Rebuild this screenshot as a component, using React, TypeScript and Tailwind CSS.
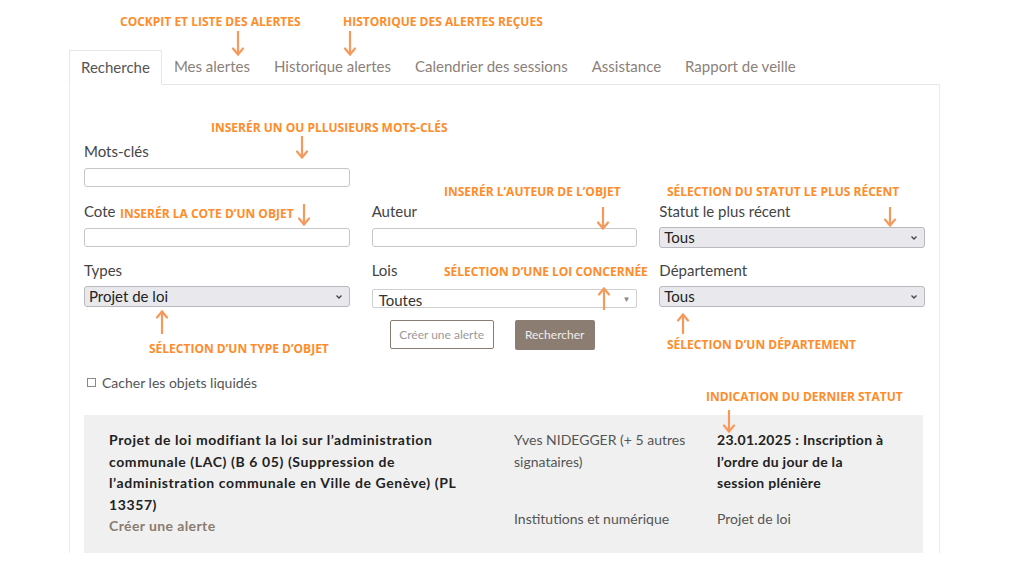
import React from "react";

const tabs = [
  "Recherche",
  "Mes alertes",
  "Historique alertes",
  "Calendrier des sessions",
  "Assistance",
  "Rapport de veille",
];

type Note = { text: string; x: number; y: number };
type Arrow = { x: number; top: number; bottom: number; up?: boolean };

const notes: Note[] = [
  { text: "COCKPIT ET LISTE DES ALERTES", x: 120, y: 22 },
  { text: "HISTORIQUE DES ALERTES REÇUES", x: 343, y: 22 },
  { text: "INSERÉR UN OU PLLUSIEURS MOTS-CLÉS", x: 211, y: 128 },
  { text: "INSERÉR LA COTE D’UN OBJET", x: 120, y: 214 },
  { text: "INSERÉR L’AUTEUR DE L’OBJET", x: 444, y: 192 },
  { text: "SÉLECTION DU STATUT LE PLUS RÉCENT", x: 667, y: 192 },
  { text: "SÉLECTION D’UNE LOI CONCERNÉE", x: 444, y: 272 },
  { text: "SÉLECTION D’UN TYPE D’OBJET", x: 149, y: 349 },
  { text: "SÉLECTION D’UN DÉPARTEMENT", x: 667, y: 345 },
  { text: "INDICATION DU DERNIER STATUT", x: 706, y: 397 },
];

const arrows: Arrow[] = [
  { x: 238, top: 31, bottom: 56 },
  { x: 350, top: 31, bottom: 56 },
  { x: 302, top: 136, bottom: 159 },
  { x: 304, top: 204, bottom: 226 },
  { x: 603, top: 207, bottom: 230 },
  { x: 890, top: 207, bottom: 227 },
  { x: 604, top: 287, bottom: 310, up: true },
  { x: 162, top: 310, bottom: 334, up: true },
  { x: 683, top: 313, bottom: 334, up: true },
  { x: 729, top: 410, bottom: 433 },
];

function ArrowMark({ a }: { a: Arrow }) {
  const h = a.bottom - a.top;
  return (
    <svg
      className="absolute"
      style={{ left: a.x - 7, top: a.top }}
      width={14}
      height={h}
      viewBox={`0 0 14 ${h}`}
      fill="none"
      stroke="#f6995c"
      strokeWidth={2.2}
      strokeLinecap="round"
      strokeLinejoin="round"
    >
      {a.up ? (
        <>
          <line x1={7} y1={1.5} x2={7} y2={h} />
          <polyline points={`2,7.5 7,1.5 12,7.5`} />
        </>
      ) : (
        <>
          <line x1={7} y1={0} x2={7} y2={h - 1.5} />
          <polyline points={`2,${h - 7.5} 7,${h - 1.5} 12,${h - 7.5}`} />
        </>
      )}
    </svg>
  );
}

function Chevron() {
  return (
    <svg width="8" height="6" viewBox="0 0 8 6" fill="none" stroke="#444" strokeWidth="1.3">
      <polyline points="1.5,1.5 4,4 6.5,1.5" />
    </svg>
  );
}

function Field({ label, children }: { label: string; children: React.ReactNode }) {
  return (
    <div className="flex flex-col">
      <div className="h-[22px] leading-[22px] text-[15px] text-[#444]">{label}</div>
      {children}
    </div>
  );
}

function TextBox() {
  return <div className="mt-[6px] h-[19px] rounded-[3px] border border-[#c6c6c6] bg-white" />;
}

function GraySelect({ value }: { value: string }) {
  return (
    <div className="mt-[5px] flex h-[21px] items-center justify-between rounded-[3px] border border-[#b9b9bd] bg-[#e9e9ed] pl-[4px] pr-[6px] text-[15px] text-[#222]">
      <span className="leading-none">{value}</span>
      <Chevron />
    </div>
  );
}

export default function App() {
  return (
    <div
      className="relative h-[576px] w-[1024px] overflow-hidden bg-white"
      style={{ fontFamily: "Lato, 'Noto Sans', sans-serif" }}
    >
      <div className="ml-[69px] w-[871px] pt-[50px]">
        {/* tabs */}
        <div className="flex border-b border-[#e6e6e6]">
          {tabs.map((t, i) => (
            <div
              key={t}
              className={
                i === 0
                  ? "-mb-px border border-b-white border-[#e6e6e6] bg-white px-[11px] py-[6px] text-[15px] leading-[21px] text-[#555]"
                  : "px-[12px] py-[6px] text-[15px] leading-[21px] text-[#8b817a]"
              }
            >
              {t}
            </div>
          ))}
        </div>

        {/* panel */}
        <div className="h-[468px] overflow-hidden border-x border-[#ececec] px-[14px] pt-[55px]">
          <div className="grid w-[841px] grid-cols-3 gap-x-[22px]">
            <Field label="Mots-clés">
              <TextBox />
            </Field>
            <div />
            <div />
          </div>

          <div className="mt-[13px] grid w-[841px] grid-cols-3 gap-x-[22px]">
            <Field label="Cote">
              <TextBox />
            </Field>
            <Field label="Auteur">
              <TextBox />
            </Field>
            <Field label="Statut le plus récent">
              <GraySelect value="Tous" />
            </Field>
          </div>

          <div className="mt-[11px] grid w-[841px] grid-cols-3 gap-x-[22px]">
            <Field label="Types">
              <GraySelect value="Projet de loi" />
            </Field>
            <Field label="Lois">
              <div className="mt-[8px] flex h-[19px] items-center justify-between rounded-[2px] border border-[#cfcfcf] bg-white pl-[6px] pr-[6px] text-[15px] text-[#333]">
                <span className="mt-[3px] leading-none">Toutes</span>
                <span className="text-[8px] text-[#888]">▼</span>
              </div>
            </Field>
            <Field label="Département">
              <GraySelect value="Tous" />
            </Field>
          </div>

          <div className="mt-[12px] grid w-[841px] grid-cols-3 gap-x-[22px]">
            <div />
            <div className="flex gap-[21px] pl-[18px]">
              <div className="flex h-[29px] w-[104px] items-center justify-center rounded-[2px] border border-[#8a7b70] text-[12px] text-[#9a9a9a]">
                Créer une alerte
              </div>
              <div className="flex h-[30px] w-[80px] items-center justify-center rounded-[2px] bg-[#8c7d73] text-[12px] text-[#f1ede9]">
                Rechercher
              </div>
            </div>
            <div />
          </div>

          <div className="mt-[21px] flex h-[22px] items-center pl-[3px] text-[14px] text-[#555]">
            <span className="mr-[6px] h-[9px] w-[9px] border border-[#888] bg-white" />
            Cacher les objets liquidés
          </div>

          {/* result card */}
          <div className="mt-[22px] flex w-[839px] bg-[#f0f0f0] pl-[25px] pt-[14px] pb-[20px]">
            <div className="w-[380px] text-[14px] leading-[21.5px]">
              <div className="font-bold tracking-[0.6px] text-[#222]">
                Projet de loi modifiant la loi sur l’administration
                <br />
                communale (LAC) (B 6 05) (Suppression de
                <br />
                l’administration communale en Ville de Genève) (PL
                <br />
                13357)
              </div>
              <div className="font-bold tracking-[0.4px] text-[#8a7b70]">Créer une alerte</div>
            </div>
            <div className="ml-[25px] grid grid-cols-[178px_180px] gap-x-[25px] gap-y-[7px] text-[14px] leading-[21.5px]">
              <div className="text-[#555]">
                Yves NIDEGGER (+ 5 autres
                <br />
                signataires)
              </div>
              <div className="font-bold tracking-[0.3px] text-[#222]">
                23.01.2025 : Inscription à
                <br />
                l’ordre du jour de la
                <br />
                session plénière
              </div>
              <div className="text-[#555]">Institutions et numérique</div>
              <div className="text-[#555]">Projet de loi</div>
            </div>
          </div>
        </div>
      </div>

      {/* annotations */}
      {notes.map((n) => (
        <div
          key={n.text}
          className="absolute whitespace-nowrap text-[12px] font-bold leading-[16px] text-[#ff8c2b]"
          style={{ left: n.x, top: n.y - 8, fontFamily: "'Open Sans', sans-serif" }}
        >
          {n.text}
        </div>
      ))}
      {arrows.map((a, i) => (
        <ArrowMark key={i} a={a} />
      ))}
    </div>
  );
}
